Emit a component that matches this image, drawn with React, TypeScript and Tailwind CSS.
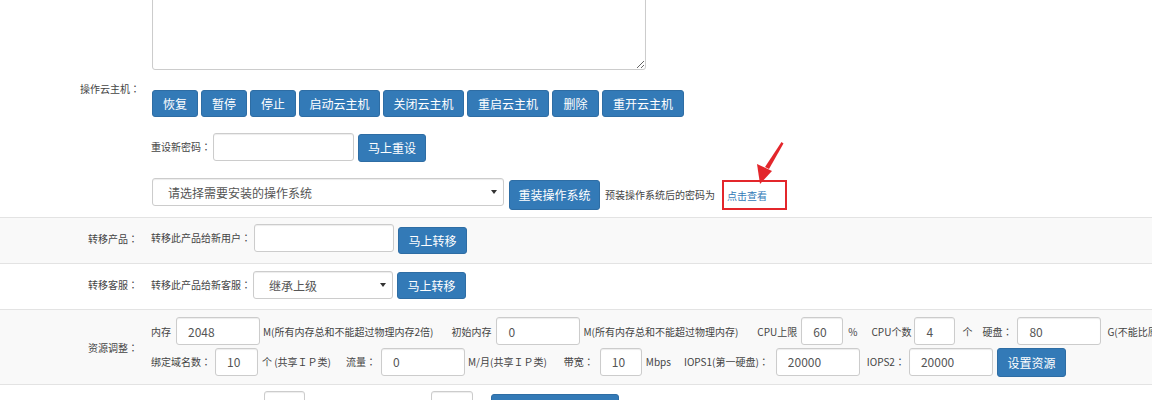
import React from 'react';

const btn =
  'inline-flex shrink-0 items-center justify-center whitespace-nowrap rounded-[3px] border border-[#2e6da4] bg-[#337ab7] text-[12px] text-white';
const field =
  'shrink-0 rounded-[3px] border border-[#ccc] bg-white px-[11px] text-[12px] text-[#555] shadow-[inset_0_1px_1px_rgba(0,0,0,0.075)] outline-none';
const txt = 'shrink-0 whitespace-nowrap text-[10px] text-[#444]';

// full-width colon drawn centred, as the reference's font does
const T = ({ s }: { s: string }) => (
  <>
    {s.split('：').map((part, i, arr) => (
      <React.Fragment key={i}>
        {part}
        {i < arr.length - 1 && <span className="font-['Noto_Sans_CJK_JP',sans-serif]">：</span>}
      </React.Fragment>
    ))}
  </>
);

const Caret = () => (
  <svg width="6" height="4" viewBox="0 0 6 4" className="shrink-0">
    <path d="M0 0h6L3 4z" fill="#333" />
  </svg>
);

const FakeSelect = ({ value, className }: { value: string; className: string }) => (
  <div className={`${field} flex h-[28px] items-center justify-between pr-[6px] pl-[15px] ${className}`}>
    <span className="whitespace-nowrap pt-[2px]">{value}</span>
    <Caret />
  </div>
);

const Input = ({ value = '', w }: { value?: string; w: string }) => (
  <input readOnly value={value} className={`${field} h-[28px] ${w}`} />
);

const Label = ({ text = '', className = '' }: { text?: string; className?: string }) => (
  <div className={`w-[140px] shrink-0 text-right text-[10px] text-[#444] whitespace-nowrap ${className}`}>
    <T s={text} />
  </div>
);

const Txt = ({ s, className = '' }: { s: string; className?: string }) => (
  <span className={`${txt} ${className}`}>
    <T s={s} />
  </span>
);

const ops = [
  { t: '恢复', w: 'w-[46px]' },
  { t: '暂停', w: 'w-[46px]' },
  { t: '停止', w: 'w-[46px]' },
  { t: '启动云主机', w: 'w-[81px]' },
  { t: '关闭云主机', w: 'w-[81px]' },
  { t: '重启云主机', w: 'w-[82px]' },
  { t: '删除', w: 'w-[47px]' },
  { t: '重开云主机', w: 'w-[82px]' },
];

export default function App() {
  return (
    <div className="relative w-[1152px] overflow-hidden bg-white font-['Noto_Sans_CJK_SC','Microsoft_YaHei',sans-serif]">
      {/* host operations */}
      <div className="pb-[7px]">
        <div className="flex">
          <Label />
          <div className="pl-[12px]">
            <textarea readOnly className="-mt-[40px] block h-[110px] w-[494px] rounded-[3px] border border-[#ccc] bg-white shadow-[inset_0_1px_1px_rgba(0,0,0,0.075)] outline-none" />
          </div>
        </div>

        <div className="mt-[10px] flex">
          <Label text="操作云主机：" className="leading-[18px]" />
          <div className="mt-[10px] flex gap-[3px] pl-[12px]">
            {ops.map((o) => (
              <button key={o.t} className={`${btn} h-[27px] ${o.w}`}>
                {o.t}
              </button>
            ))}
          </div>
        </div>

        <div className="mt-[16px] flex items-start">
          <Label />
          <div className="flex items-start pl-[11px]">
            <Txt s="重设新密码：" className="leading-[28px]" />
            <div className="ml-[2px]">
              <Input w="w-[141px]" />
            </div>
            <button className={`${btn} mt-[1px] ml-[4px] h-[28px] w-[68px]`}>马上重设</button>
          </div>
        </div>

        <div className="mt-[16px] flex items-start">
          <Label />
          <div className="flex items-start pl-[12px]">
            <FakeSelect value="请选择需要安装的操作系统" className="w-[352px]" />
            <button className={`${btn} mt-[2px] ml-[5px] h-[30px] w-[91px]`}>重装操作系统</button>
            <Txt s="预装操作系统后的密码为" className="mt-[2px] ml-[5px] leading-[30px]" />
            <span className="mt-[2px] ml-[7px] inline-flex h-[30px] w-[65px] shrink-0 items-center border-2 border-[#e3262b] pl-[3px] text-[10px] text-[#337ab7]">
              点击查看
            </span>
          </div>
        </div>
      </div>

      {/* transfer product */}
      <div className="flex h-[46px] border-t border-[#e3e3e3] bg-[#f9f9f9] pt-[6px]">
        <Label text="转移产品：" className="pt-[1px] pr-[2px] leading-[28px]" />
        <div className="flex items-start pl-[11px]">
          <Txt s="转移此产品给新用户：" className="leading-[28px]" />
          <div className="ml-[3px]">
            <Input w="w-[140px]" />
          </div>
          <button className={`${btn} mt-[3px] ml-[4px] h-[27px] w-[69px]`}>马上转移</button>
        </div>
      </div>

      {/* transfer support */}
      <div className="flex h-[46px] border-t border-[#e3e3e3] bg-white pt-[7px]">
        <Label text="转移客服：" className="pr-[2px] leading-[28px]" />
        <div className="flex items-start pl-[11px]">
          <Txt s="转移此产品给新客服：" className="leading-[28px]" />
          <FakeSelect value="继承上级" className="ml-[2px] w-[140px]" />
          <button className={`${btn} mt-[1px] ml-[4px] h-[27px] w-[69px]`}>马上转移</button>
        </div>
      </div>

      {/* resources */}
      <div className="flex h-[75px] items-center border-t border-[#e3e3e3] bg-[#f9f9f9]">
        <Label text="资源调整：" className="pr-[2px]" />
        <div className="flex flex-col gap-[1px] pl-[11px]">
          <div className="flex items-center">
            <Txt s="内存" />
            <div className="ml-[5px]"><Input value="2048" w="w-[84px]" /></div>
            <Txt s="M(所有内存总和不能超过物理内存2倍)" className="ml-[3px]" />
            <Txt s="初始内存" className="ml-[18px]" />
            <div className="ml-[5px]"><Input value="0" w="w-[84px]" /></div>
            <Txt s="M(所有内存总和不能超过物理内存)" className="ml-[3px]" />
            <Txt s="CPU上限" className="ml-[19px]" />
            <div className="ml-[4px]"><Input value="60" w="w-[42px]" /></div>
            <Txt s="%" className="ml-[5px]" />
            <Txt s="CPU个数" className="ml-[14px]" />
            <div className="ml-[3px]"><Input value="4" w="w-[41px]" /></div>
            <Txt s="个" className="ml-[7px]" />
            <Txt s="硬盘：" className="ml-[10px]" />
            <div className="ml-[5px]"><Input value="80" w="w-[84px]" /></div>
            <Txt s="G(不能比原来的小)" className="ml-[6px]" />
          </div>
          <div className="flex items-center">
            <Txt s="绑定域名数：" />
            <div className="ml-[4px]"><Input value="10" w="w-[43px]" /></div>
            <Txt s="个 (共享ＩＰ类)" className="ml-[4px]" />
            <Txt s="流量：" className="ml-[15px]" />
            <div className="ml-[5px]"><Input value="0" w="w-[84px]" /></div>
            <Txt s="M/月(共享ＩＰ类)" className="ml-[3px]" />
            <Txt s="带宽：" className="ml-[17px]" />
            <div className="ml-[6px]"><Input value="10" w="w-[42px]" /></div>
            <Txt s="Mbps" className="ml-[4px]" />
            <Txt s="IOPS1(第一硬盘)：" className="ml-[13px]" />
            <div className="ml-[7px]"><Input value="20000" w="w-[84px]" /></div>
            <Txt s="IOPS2：" className="ml-[7px]" />
            <div className="ml-[4px]"><Input value="20000" w="w-[84px]" /></div>
            <button className={`${btn} mt-[2px] ml-[4px] h-[29px] w-[69px]`}>设置资源</button>
          </div>
        </div>
      </div>

      {/* next row, cut off by the window */}
      <div className="flex h-[60px] border-t border-[#e3e3e3] bg-white pt-[6px]">
        <Label />
        <div className="flex items-start pl-[124px]">
          <Input w="w-[41px]" />
          <div className="ml-[126px]"><Input w="w-[42px]" /></div>
          <button className={`${btn} mt-[3px] ml-[18px] h-[30px] w-[128px]`} />
        </div>
      </div>

      {/* annotation arrow */}
      <svg className="pointer-events-none absolute top-[138px] left-[750px]" width="40" height="50" viewBox="0 0 40 50">
        <polygon points="31.5,4 33.5,5.5 19,31 15,29" fill="#e3262b" />
        <polygon points="7,26 22,33 10,46" fill="#e3262b" />
      </svg>
    </div>
  );
}
